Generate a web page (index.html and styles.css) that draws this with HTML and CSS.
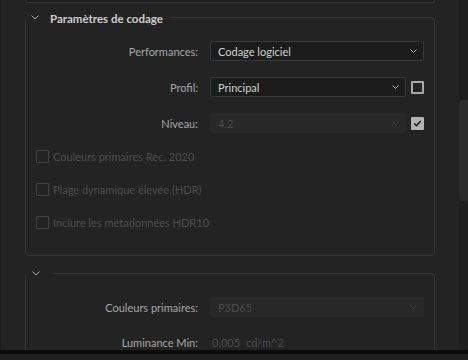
FILE: index.html
```html
<!DOCTYPE html>
<html lang="fr">
<head>
<meta charset="utf-8">
<link rel="stylesheet" href="styles.css">
</head>
<body>
<div class="app">
  <div class="main">
    <div class="scroll">
      <div class="panel-prev"></div>

      <section class="panel">
        <div class="panel-head">
          <svg class="chev" width="8" height="5" viewBox="0 0 8 5"><path d="M0.5 0.5 L4 4 L7.5 0.5" fill="none" stroke="#a9a9a9" stroke-width="1"/></svg>
          <span class="title">Paramètres de codage</span>
        </div>
        <div class="rows">
          <div class="row">
            <span class="lbl">Performances:</span>
            <div class="select"><span>Codage logiciel</span><svg class="dd" width="7" height="4" viewBox="0 0 7 4"><path d="M0.5 0.5 L3.5 3.5 L6.5 0.5" fill="none" stroke="#b5b5b5" stroke-width="1"/></svg></div>
          </div>
          <div class="row">
            <span class="lbl">Profil:</span>
            <div class="ctl">
              <div class="select"><span>Principal</span><svg class="dd" width="7" height="4" viewBox="0 0 7 4"><path d="M0.5 0.5 L3.5 3.5 L6.5 0.5" fill="none" stroke="#b5b5b5" stroke-width="1"/></svg></div>
              <span class="cb"></span>
            </div>
          </div>
          <div class="row">
            <span class="lbl">Niveau:</span>
            <div class="ctl">
              <div class="select disabled"><span>4.2</span><svg class="dd" width="7" height="4" viewBox="0 0 7 4"><path d="M0.5 0.5 L3.5 3.5 L6.5 0.5" fill="none" stroke="#3e3e3e" stroke-width="1"/></svg></div>
              <span class="cb checked"><svg width="11" height="9" viewBox="0 0 11 9"><path d="M1.5 4.5 L4.2 7 L9.5 1.5" fill="none" stroke="#1f1f1f" stroke-width="2"/></svg></span>
            </div>
          </div>
        </div>
        <div class="checks">
          <div class="check"><span class="cb off"></span><span>Couleurs primaires Rec. 2020</span></div>
          <div class="check"><span class="cb off"></span><span>Plage dynamique élevée (HDR)</span></div>
          <div class="check"><span class="cb off"></span><span>Inclure les métadonnées HDR10</span></div>
        </div>
      </section>

      <section class="panel panel-2">
        <div class="panel-head short">
          <svg class="chev" width="8" height="5" viewBox="0 0 8 5"><path d="M0.5 0.5 L4 4 L7.5 0.5" fill="none" stroke="#a9a9a9" stroke-width="1"/></svg>
        </div>
        <div class="rows tight">
          <div class="row">
            <span class="lbl">Couleurs primaires:</span>
            <div class="select disabled"><span>P3D65</span><svg class="dd" width="7" height="4" viewBox="0 0 7 4"><path d="M0.5 0.5 L3.5 3.5 L6.5 0.5" fill="none" stroke="#3e3e3e" stroke-width="1"/></svg></div>
          </div>
          <div class="row">
            <span class="lbl">Luminance Min:</span>
            <div class="value"><span>0,005</span><span>cd/m^2</span></div>
          </div>
        </div>
      </section>
    </div>
    <div class="scrollbar"><div class="thumb"></div></div>
  </div>
  <div class="bottom"></div>
</div>
</body>
</html>
```
FILE: styles.css
```css
* { box-sizing: border-box; }
html, body { margin: 0; padding: 0; }
body {
  width: 468px;
  height: 360px;
  overflow: hidden;
  background: #232323;
  font-family: Lato, "Open Sans", sans-serif;
  font-size: 11px;
  color: #a6a6a6;
}
.app { display: flex; flex-direction: column; height: 360px; }
.main { display: flex; height: 350px; border-left: 1px solid #1c1c1c; }
.scroll { width: 458px; overflow: hidden; }
.panel-prev {
  margin: 0 24px 0 24px;
  height: 3px;
  background: #1f1f1f;
  border: 1px solid #363636;
  border-top: none;
  border-radius: 0 0 4px 4px;
}
.panel {
  margin: 14px 24px 0 24px;
  border: 1px solid #363636;
  border-radius: 4px;
}
.panel-2 { margin-top: 17px; border-bottom: none; border-radius: 4px 4px 0 0; height: 90px; }
.panel-head {
  margin-top: -9px;
  height: 18px;
  width: fit-content;
  display: flex;
  align-items: center;
  background: #232323;
  padding: 0 6px 0 5px;
  gap: 11px;
}
.panel-head.short { padding: 0 14px 0 6px; }
.chev { display: block; margin-top: -2px; }
.title {
  font-weight: 700;
  font-size: 11.5px;
  color: #cdcdcd;
}
.rows {
  display: flex;
  flex-direction: column;
  gap: 16px;
  padding-top: 14px;
}
.rows.tight { gap: 15px; }
.row {
  display: grid;
  grid-template-columns: 172px 214px;
  column-gap: 12px;
  height: 20px;
  align-items: center;
}
.lbl { text-align: right; color: #a6a6a6; }
.ctl { display: flex; align-items: center; gap: 5px; }
.ctl .select { flex: 1; }
.select {
  height: 20px;
  display: flex;
  align-items: center;
  justify-content: space-between;
  background: #1c1c1c;
  border: 1px solid #393939;
  border-radius: 2px;
  padding: 0 6px 0 7px;
  color: #d2d2d2;
}
.select.disabled {
  background: #282828;
  border-color: #282828;
  color: #4b4b4b;
}
.cb {
  width: 13px;
  height: 13px;
  flex: none;
  border: 2px solid #a9a9a9;
  border-radius: 1px;
  display: flex;
  align-items: center;
  justify-content: center;
}
.cb.checked { background: #b3b3b3; border-color: #b3b3b3; }
.cb.off { border: 1.5px solid #434343; }
.checks {
  display: flex;
  flex-direction: column;
  gap: 13px;
  padding: 13px 0 23px 10px;
  color: #4e4e4e;
}
.check { display: flex; align-items: center; gap: 4px; height: 20px; }
.value { display: flex; gap: 6px; padding-left: 2px; color: #4e4e4e; }
.scrollbar { width: 9px; background: #1e1e1e; }
.thumb {
  margin-top: 100px;
  height: 101px;
  background: #2b2b2b;
  border-radius: 4px 0 0 4px;
}
.bottom { height: 10px; background: #1f1f1f; border-top: 4px solid #0b0b0b; }
```
